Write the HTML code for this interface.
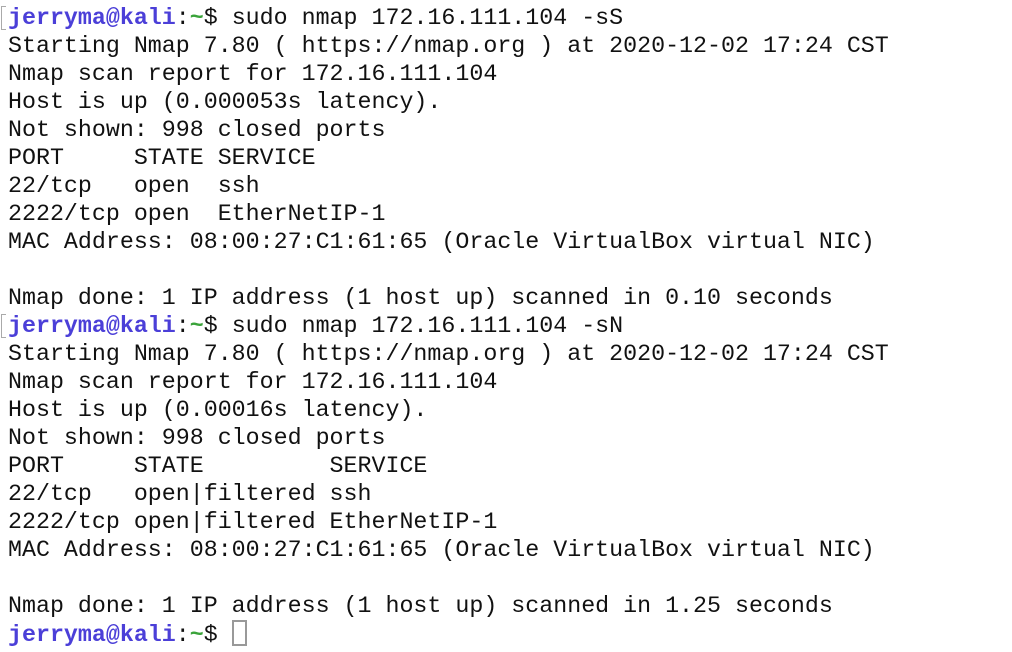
<!DOCTYPE html>
<html><head><meta charset="utf-8"><style>
html,body{margin:0;padding:0;background:#fff;width:1012px;height:652px;overflow:hidden}
pre{margin:0;position:absolute;left:8px;top:4px;font-family:"Liberation Mono","DejaVu Sans Mono",monospace;font-size:23.3px;line-height:28px;color:#111}
.u{color:#4b3fd8;font-weight:bold}.t{color:#3aa33a;font-weight:bold}
.br{position:absolute;left:1px;width:4px;height:22px;border:1.5px solid #aaa;border-right:none}
.cur{display:inline-block;width:11px;height:22px;border:2px solid #999;vertical-align:-5px}
</style></head><body>
<div class="br" style="top:6px"></div><div class="br" style="top:314px"></div>
<pre><span class="u">jerryma@kali</span>:<span class="t">~</span>$ sudo nmap 172.16.111.104 -sS
Starting Nmap 7.80 ( https://nmap.org ) at 2020-12-02 17:24 CST
Nmap scan report for 172.16.111.104
Host is up (0.000053s latency).
Not shown: 998 closed ports
PORT     STATE SERVICE
22/tcp   open  ssh
2222/tcp open  EtherNetIP-1
MAC Address: 08:00:27:C1:61:65 (Oracle VirtualBox virtual NIC)

Nmap done: 1 IP address (1 host up) scanned in 0.10 seconds
<span class="u">jerryma@kali</span>:<span class="t">~</span>$ sudo nmap 172.16.111.104 -sN
Starting Nmap 7.80 ( https://nmap.org ) at 2020-12-02 17:24 CST
Nmap scan report for 172.16.111.104
Host is up (0.00016s latency).
Not shown: 998 closed ports
PORT     STATE         SERVICE
22/tcp   open|filtered ssh
2222/tcp open|filtered EtherNetIP-1
MAC Address: 08:00:27:C1:61:65 (Oracle VirtualBox virtual NIC)

Nmap done: 1 IP address (1 host up) scanned in 1.25 seconds
<span class="u">jerryma@kali</span>:<span class="t">~</span>$ <span class="cur"></span></pre>
</body></html>
